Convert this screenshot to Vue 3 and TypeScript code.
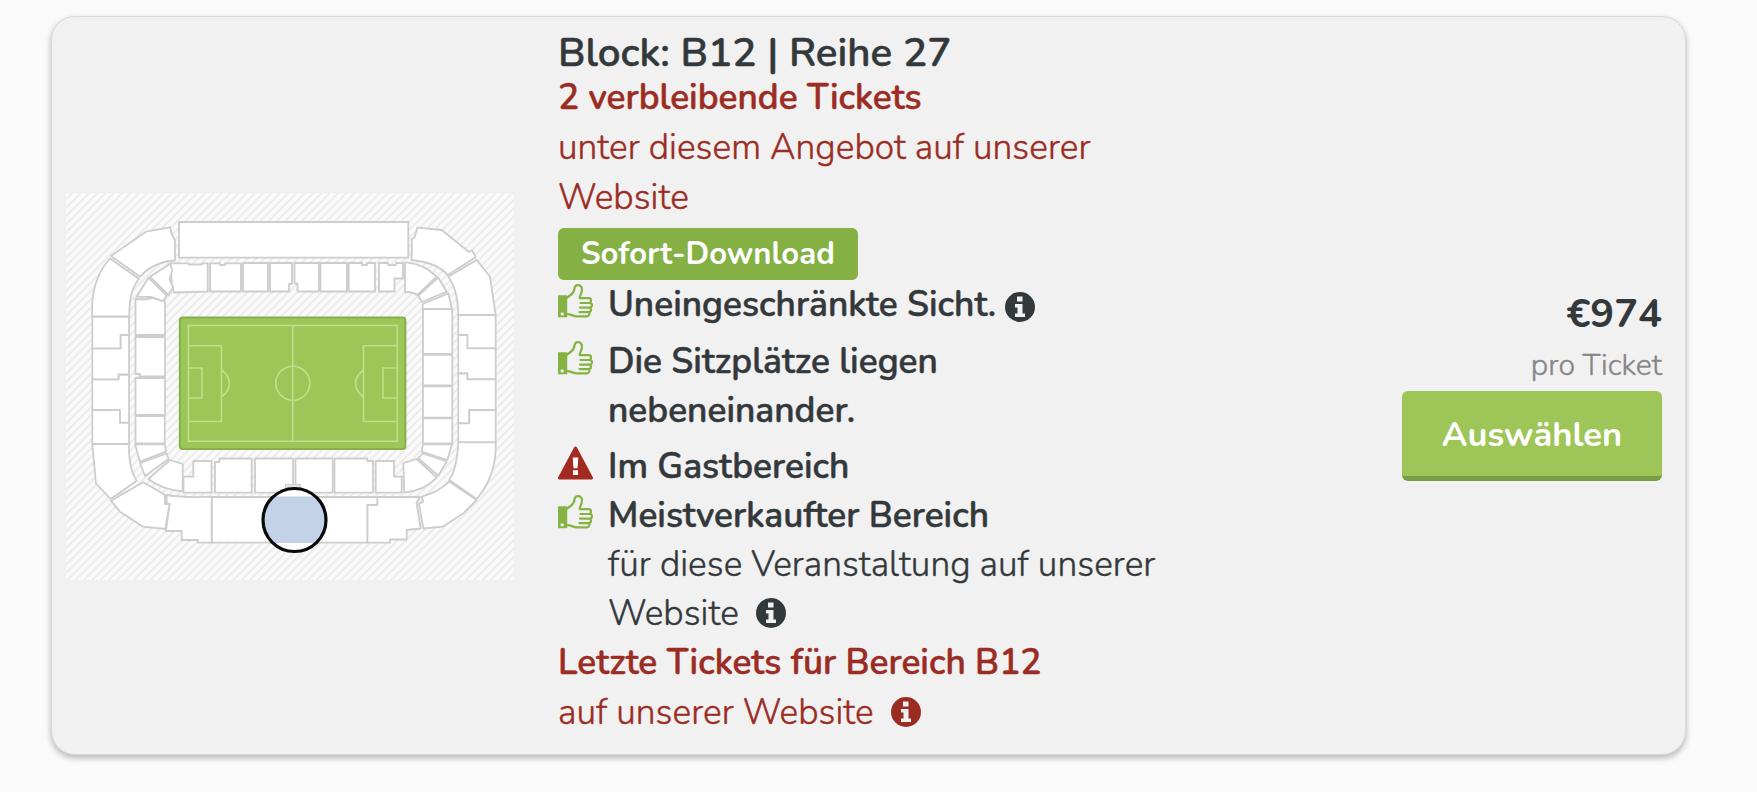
<script setup lang="ts">
interface Perk {
  icon: 'thumb' | 'warning'
  title: string
  detail?: string
  info?: 'tight' | 'wide'
  gap?: boolean
}

const perks: Perk[] = [
  { icon: 'thumb', title: 'Uneingeschränkte Sicht.', info: 'tight', gap: true },
  { icon: 'thumb', title: 'Die Sitzplätze liegen nebeneinander.', gap: true },
  { icon: 'warning', title: 'Im Gastbereich' },
  {
    icon: 'thumb',
    title: 'Meistverkaufter Bereich',
    detail: 'für diese Veranstaltung auf unserer Website',
    info: 'wide',
  },
]

// Outer tier, clockwise from the main stand
const outerTier: string[] = [
  'M179 222H408.3V257.7H179Z',
  'M411.7 260V239L414.5 237.5 417.3 227.7 441.7 230 469 252 472 250 475.7 257.3 447.7 275Q438 263 411.7 260Z',
  'M476.7 260 490 276.7 495.7 315H458.3Q458 290 448.3 276.7Z',
  'M458.3 315H495.7V348.3H467.3V335H458.3Z',
  'M458.3 335H467.3V348.3H495.7V379.3H467.3V373.5H458.3Z',
  'M458.3 373.5H467.3V379.3H495.7V410H469.3V423.3H458.3Z',
  'M458.3 423.3H469.3V410H495.7V442.3H458.3Z',
  'M458.3 442.3H495.7Q497 475 476.7 499L449.3 480Q457 469 458.3 442.3Z',
  'M421.7 496.7Q437 493 449.3 481.7L476.7 500 463.3 513.3 442.7 526.7 423.3 528.5 419 504 423 502Z',
  'M377.3 497H420L416.5 503 420.7 528.5 406.7 530V539.5H390V542.7H367.3V505H377.3Z',
  'M211.7 497H377.3V505H367.3V542.7H211.7Z',
  'M166.7 495Q185 498 211.7 496.7V542.7H198V540H181.7V531H166L169.5 504H166.7Z',
  'M143.3 482.3 165 495V504H169.5L165.3 529 143.3 526.7 120 511.7 111 500.7Z',
  'M92.3 444H128.7Q129 470 136.7 480.7L110.7 499 96 483.5Z',
  'M92.3 410H120V422.7H129V444H92.3Z',
  'M92.3 379.3H118.5V374.5H129V422.7H120V410H92.3Z',
  'M92.3 348.3H120.5V335H129V374.5H118.5V379.3H92.3Z',
  'M92.3 316.5H129V335H120.5V348.3H92.3Z',
  'M110 258.5 139 279Q129 290 129.3 316.5H92.3Q90 281 110 258.5Z',
  'M111 256 146 231.7 170 227.3 172 235 175 240V260.5Q153 262 140 276.7Z',
]

// Inner tier, clockwise from the block behind the top-left corner
const innerTier: string[] = [
  'M170.7 263.3H189V264.5H202V263.3H207.7V291.5L174 292.5 171.7 283Z',
  'M210 263.3H220V265H225V263.3H241V291.5H210Z',
  'M243 263H268V291.5H243Z',
  'M270 263H292V284H289V291.5H270Z',
  'M294.5 263H319V291.5H297.5V283.5H294.5Z',
  'M320.5 263H347V291.5H320.5Z',
  'M348.7 263H362V265H367V263H375V291.5H348.7Z',
  'M379 263H388V265H396V263H403V278.5H394.5V291.5H379Z',
  'M405 262.3Q423 263 436.7 276.7L417.3 295Q412 291 405 292.3Z',
  'M438.3 277.7 446.7 291.7 421.7 302 418.3 295.7Z',
  'M448.3 293.3 452 309H422.7V304Z',
  'M423 309H452.3V354H423Z',
  'M423 354.8H452.3V385.5H423Z',
  'M423 386.3H452.3V417.6H423Z',
  'M423 418.4H452.3V443.4H423Z',
  'M423 444.3H452L447.3 460 421.7 451.7Z',
  'M422.7 453.5 446.7 461.5 438.3 475.7 418.3 458.3Z',
  'M403.3 463 416.7 459 436.7 477.7Q424 491 404.3 492.5Z',
  'M375.7 461H394V476.7H401.7V492.7H375.7Z',
  'M334.5 458.5H367.3V461H373V492.7H334.5Z',
  'M295.5 458.5H332.7V492.7H295.5Z',
  'M255 458.5H293V492.7H255Z',
  'M215 462H219.5V458.5H251.7V492.7H215Z',
  'M183.5 476.7H193.3V461H211.5V492.7H183.5Z',
  'M170 460 182.7 464V491.3Q163 490 148.3 479Z',
  'M140 463 166.7 453.5 168.5 459 145 476Z',
  'M135 444.3H164.7L166 451.7 140 461.7Z',
  'M135.5 416H164.7V443.5H135.5Z',
  'M135.5 378H165V415H135.5Z',
  'M135.5 337H165V376.5H140V374H135.5Z',
  'M135.5 299 145 299.5 152 298 165 301.7V335H135.5Z',
  'M136.7 296.7 148.3 277.7 166.7 295.5 163 301 151.7 297Z',
  'M150 276.7 170 264 172.5 270 169.5 279 173 287 168.3 295Z',
]
</script>

<template>
  <main class="page">
    <article class="card">
      <svg class="stadium" viewBox="66 193 448 387" role="img" aria-label="B12">
        <defs>
          <pattern id="hatch" width="8.3" height="8.3" patternUnits="userSpaceOnUse">
            <path d="M-1 9.3 9.3 -1M-1 1 1 -1M7.3 9.3 9.3 7.3" class="hatch-line" />
          </pattern>
          <clipPath id="marker-band">
            <rect x="260" y="496.5" width="70" height="46.5" />
          </clipPath>
        </defs>
        <rect x="66" y="193" width="448" height="387" class="ground" />
        <rect x="66" y="193" width="448" height="387" fill="url(#hatch)" />
        <g class="blocks">
          <path v-for="d in outerTier" :key="d" :d="d" />
          <path v-for="d in innerTier" :key="d" :d="d" />
        </g>
        <rect x="179.8" y="317.5" width="225.6" height="131.5" rx="3" class="pitch" />
        <g class="pitch-lines">
          <path d="M188.5 325.5H397.3V441.3H188.5ZM292.8 325.5V441.3" />
          <circle cx="292.8" cy="383.2" r="17" />
          <path d="M188.5 345.7H221.5V421.5H188.5M188.5 368H202V398H188.5M221.5 370Q229.5 376 229.5 383.5T221.5 397" />
          <path d="M397.3 345.7H363.5V421.5H397.3M397.3 368H383V398H397.3M363.5 370Q355.5 376 355.5 383.5T363.5 397" />
        </g>
        <rect x="285.5" y="484.5" width="15" height="4" class="gate" />
        <circle cx="294.5" cy="520" r="31.5" fill="#fff" />
        <circle cx="294.5" cy="520" r="30.5" fill="#c3d2e6" clip-path="url(#marker-band)" />
        <circle cx="294.5" cy="520" r="31.5" class="marker" />
      </svg>

      <div class="details">
        <h2 class="title">Block: B12 | Reihe 27</h2>
        <p class="alert alert-strong">2 verbleibende Tickets</p>
        <p class="alert alert-detail">unter diesem Angebot auf unserer Website</p>
        <span class="badge">Sofort-Download</span>

        <ul class="perks">
          <li v-for="perk in perks" :key="perk.title" :class="['perk', { 'perk-gap': perk.gap }]">
            <svg v-if="perk.icon === 'thumb'" class="perk-icon" viewBox="0 0 35 34">
              <path
                fill-rule="evenodd"
                d="M0 11.3H9.2V33.3H0ZM4.2 28.2A1.7 1.7 0 1 0 4.2 31.6A1.7 1.7 0 1 0 4.2 28.2Z"
                fill="#84b344"
              />
              <path
                d="M9.2 13.5C12 11.8 15.8 9.5 16.3 5.5C16.6 2.5 17.8 1.2 20 1.2C23.5 1.2 24.3 4 23.8 7C23.3 10 21.5 12 21.7 14.2H31Q33 14.2 33 16.6T31 19H22.5M31 19Q34 19 34 21.3T31.5 23.6H22M31.5 23.6Q33.3 24 33 26T30.5 28.2H21.5M30.5 28.2Q31.7 29 31.3 30.6T29 32.4H19C15.5 32.4 13.5 30.3 9.2 30.2"
                class="thumb-line"
              />
            </svg>
            <svg v-else class="perk-icon" viewBox="0 0 35 34">
              <path d="M17.5 2 33.5 32H1.5Z" class="warning" />
              <path d="M14.7 11.5H20.3L19.5 22.3H15.5ZM15 24.3H20V29H15Z" fill="#fff" />
            </svg>
            <div class="perk-text">
              <strong>{{ perk.title }}</strong>
              <svg v-if="perk.info === 'tight'" class="info info-tight" viewBox="0 0 30 30">
                <circle cx="15" cy="15" r="15" fill="currentColor" />
                <path d="M12 4.5H17.5V9.5H12ZM10 12H17.5V21.5H20V25H10V21.5H12.5V15.5H10Z" fill="#f1f1f1" />
              </svg>
              <div v-if="perk.detail" class="perk-detail">
                {{ perk.detail }}
                <svg v-if="perk.info === 'wide'" class="info info-wide" viewBox="0 0 30 30">
                  <circle cx="15" cy="15" r="15" fill="currentColor" />
                  <path d="M12 4.5H17.5V9.5H12ZM10 12H17.5V21.5H20V25H10V21.5H12.5V15.5H10Z" fill="#f1f1f1" />
                </svg>
              </div>
            </div>
          </li>
        </ul>

        <p class="alert alert-strong">Letzte Tickets für Bereich B12</p>
        <p class="alert alert-detail">
          auf unserer Website
          <svg class="info info-wide" viewBox="0 0 30 30">
            <circle cx="15" cy="15" r="15" fill="currentColor" />
            <path d="M12 4.5H17.5V9.5H12ZM10 12H17.5V21.5H20V25H10V21.5H12.5V15.5H10Z" fill="#f1f1f1" />
          </svg>
        </p>
      </div>

      <div class="purchase">
        <span class="price">€974</span>
        <span class="per-ticket">pro Ticket</span>
        <button type="button" class="select">Auswählen</button>
      </div>
    </article>
  </main>
</template>

<style>
body {
  background: #fafafa;
}
</style>

<style scoped>
.page {
  box-sizing: border-box;
  height: 792px;
  padding: 16px 0 0 51px;
  background: #fafafa;
}

.card {
  display: flex;
  box-sizing: border-box;
  width: 1635px;
  height: 739px;
  padding: 13px 23px 0 14px;
  border: 1px solid #d9d9d9;
  border-radius: 24px;
  background: #f1f1f1;
  box-shadow: 0 3px 6px rgba(0, 0, 0, 0.28);
  color: #33383b;
  font-family: Nunito, Lato, sans-serif;
  font-size: 35.3px;
}

.stadium {
  flex: none;
  align-self: flex-start;
  width: 448px;
  height: 387px;
  margin-top: 163px;
}

.ground {
  fill: #fafafa;
}

.hatch-line {
  fill: none;
  stroke: #e9e9e9;
  stroke-width: 1.6;
}

.blocks path {
  fill: #fff;
  stroke: #cdcdcd;
  stroke-width: 1.8;
  stroke-linejoin: round;
}

.pitch {
  fill: #9dc658;
  stroke: #86b04c;
  stroke-width: 2;
}

.pitch-lines {
  fill: none;
  stroke: #bfe08a;
  stroke-width: 1.6;
}

.gate {
  fill: #e4e4e4;
  stroke: #cfcfcf;
}

.marker {
  fill: none;
  stroke: #0a0a0a;
  stroke-width: 3.2;
}

.details {
  width: 620px;
  margin-left: 44px;
}

.title,
.alert,
.perks {
  margin: 0;
  padding: 0;
}

.title,
.alert-strong,
.perk-text strong {
  font-weight: 600;
  -webkit-text-stroke: 0.5px currentColor;
}

.alert-detail,
.perk-detail {
  font-weight: 300;
  letter-spacing: 0.04px;
  -webkit-text-stroke: 0.4px currentColor;
}

.title {
  padding-top: 2px;
  font-size: 40.4px;
  line-height: 41px;
}

.alert {
  color: #9b2c23;
}

.alert-strong {
  line-height: 49px;
}

.alert-detail {
  width: 560px;
  line-height: 50px;
}

.badge {
  display: block;
  width: fit-content;
  margin-top: 6px;
  padding: 0 23px;
  border-radius: 6px;
  background: #84b044;
  color: #fff;
  font-size: 31.1px;
  font-weight: 700;
  line-height: 52px;
}

.perks {
  list-style: none;
}

.perk {
  display: flex;
  line-height: 48.8px;
}

.perk-gap {
  margin-bottom: 8px;
}

.perk-icon {
  flex: none;
  width: 35px;
  height: 34px;
  margin: 4px 15px 0 0;
}

.perk-text {
  width: 560px;
}

.perk-text strong {
  display: inline-block;
  max-width: 400px;
  vertical-align: top;
}

.thumb-line {
  fill: none;
  stroke: #84b344;
  stroke-width: 2.2;
  stroke-linecap: round;
  stroke-linejoin: round;
}

.warning {
  fill: #a32a20;
  stroke: #a32a20;
  stroke-width: 3;
  stroke-linejoin: round;
}

.info {
  width: 30px;
  height: 30px;
}

.info-tight {
  margin: -10px 0 0 9px;
  vertical-align: -6px;
}

.info-wide {
  margin-left: 8px;
  vertical-align: -3px;
}

.purchase {
  display: flex;
  flex-direction: column;
  align-items: flex-end;
  margin-left: auto;
  padding-top: 258px;
}

.price {
  font-size: 39.8px;
  font-weight: 700;
  line-height: 52px;
}

.per-ticket {
  color: #858585;
  font-size: 30.3px;
  font-weight: 300;
  line-height: 50px;
  -webkit-text-stroke: 0.4px currentColor;
}

.select {
  width: 260px;
  height: 90px;
  margin-top: 1px;
  padding: 2px 0 0;
  border: 0;
  border-bottom: 5px solid #799d45;
  border-radius: 6px;
  background: #9dc558;
  color: #fff;
  font: inherit;
  font-size: 34.5px;
  font-weight: 700;
}
</style>
